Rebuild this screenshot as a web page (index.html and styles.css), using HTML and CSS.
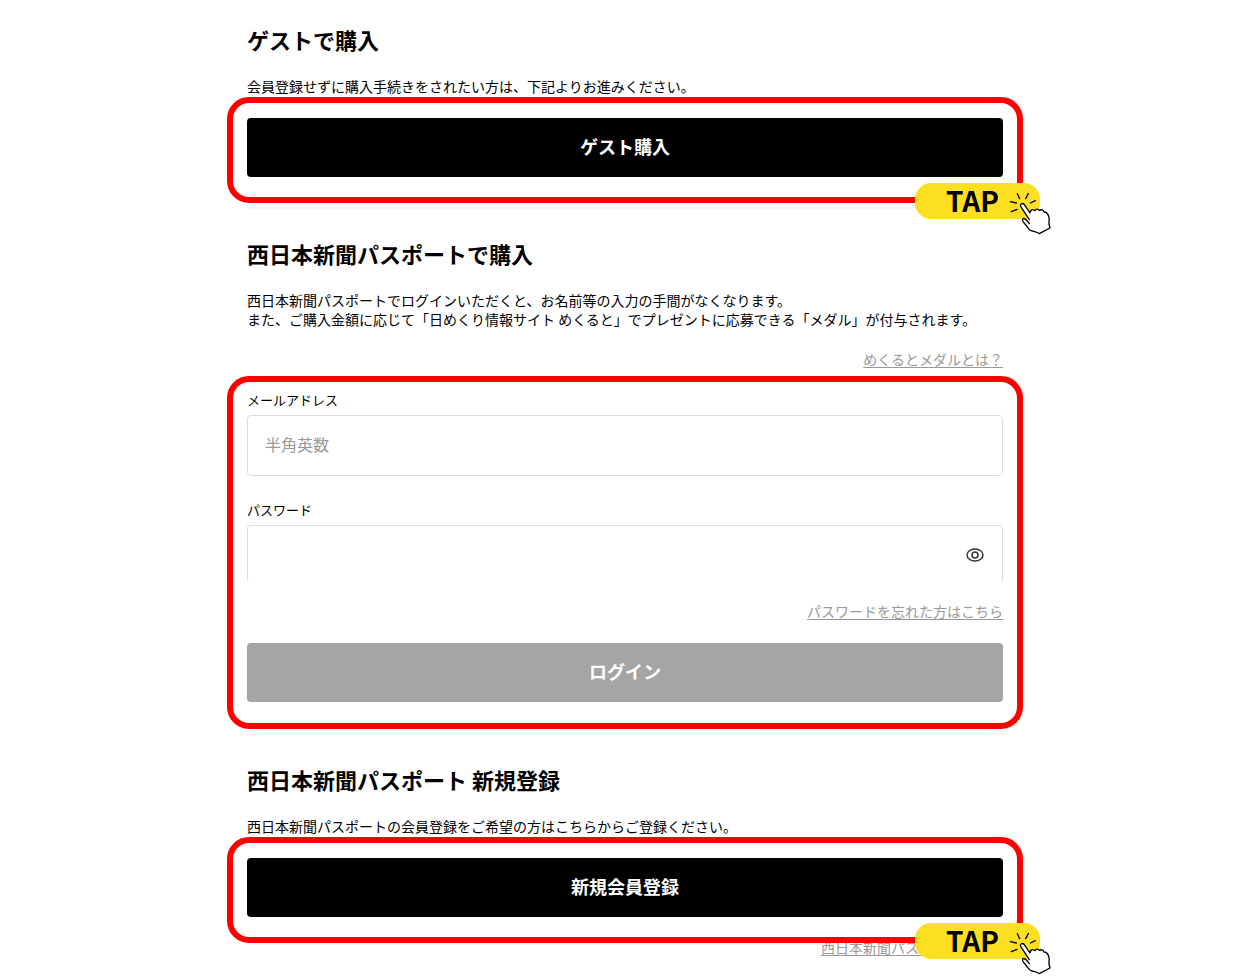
FILE: index.html
```
<!DOCTYPE html>
<html lang="ja">
  <head>
    <meta charset="UTF-8" />
    <meta name="viewport" content="width=device-width, initial-scale=1.0" />
    <title>ログイン・購入手続き</title>
    <link rel="stylesheet" href="styles.css">
  </head>
  <body>
    <!-- shared tap icon -->
    <svg class="sprite" aria-hidden="true">
      <symbol id="tap-hand" viewBox="354 90 132 138">
        <g fill="none" stroke="#000" stroke-width="4" stroke-linecap="round" stroke-linejoin="round">
          <path d="M382 101l7 15M415 101l-8 15M436 122l-15 7M361 125l18 4M364 155l17-7" />
          <path fill="#fff" d="M418 179L392 139c-3-7 6-12 11-5l17 25c1-8 6-12 11-9l4 2c3-6 10-6 13-1 6-4 12-1 14 5 8 0 13 8 15 16 2 8-1 14 0 20l3 12-32 17c-7-7-19-5-28-11-7-5-10-13-17-20-5-6-8-10-4-14 7-3 11 5 19 15" />
        </g>
      </symbol>
    </svg>

    <main class="container">
      <section class="section">
        <h2 class="section__title">ゲストで購入</h2>
        <p class="section__text">会員登録せずに購入手続きをされたい方は、下記よりお進みください。</p>
        <div class="frame">
          <button class="button" type="button">ゲスト購入</button>
          <div class="tap">
            TAP
            <svg class="tap__hand" aria-hidden="true"><use href="#tap-hand" /></svg>
          </div>
        </div>
      </section>

      <section class="section">
        <h2 class="section__title">西日本新聞パスポートで購入</h2>
        <p class="section__text">
          西日本新聞パスポートでログインいただくと、お名前等の入力の手間がなくなります。<br />
          また、ご購入金額に応じて「日めくり情報サイト めくると」でプレゼントに応募できる「メダル」が付与されます。
        </p>
        <p class="more more--medal"><a class="link" href="#">めくるとメダルとは？</a></p>
        <form class="frame frame--form">
          <label class="label" for="email">メールアドレス</label>
          <input class="input" type="email" id="email" placeholder="半角英数" />
          <label class="label label--password" for="password">パスワード</label>
          <div class="password">
            <input class="input input--password" type="password" id="password" />
            <button class="password__eye" type="button" aria-label="パスワードを表示">
              <svg viewBox="0 0 18 16" width="18" height="16" fill="none" stroke="#333" stroke-width="1.5">
                <ellipse cx="9" cy="8" rx="8" ry="6" />
                <circle cx="9" cy="8" r="3" />
              </svg>
            </button>
          </div>
          <p class="more more--forgot"><a class="link" href="#">パスワードを忘れた方はこちら</a></p>
          <button class="button button--login" type="submit" disabled>ログイン</button>
        </form>
      </section>

      <section class="section">
        <h2 class="section__title">西日本新聞パスポート 新規登録</h2>
        <p class="section__text">西日本新聞パスポートの会員登録をご希望の方はこちらからご登録ください。</p>
        <div class="frame">
          <button class="button" type="button">新規会員登録</button>
          <div class="tap">
            TAP
            <svg class="tap__hand" aria-hidden="true"><use href="#tap-hand" /></svg>
          </div>
        </div>
        <p class="more more--passport"><a class="link" href="#">西日本新聞パスポートとは？</a></p>
      </section>
    </main>
  </body>
</html>
```
FILE: styles.css
```
* {
  padding: 0;
  margin: 0;
  box-sizing: border-box;
}

body {
  background-color: #fff;
  color: #000;
  font-family: "Noto Sans CJK JP", sans-serif;
  font-size: 14px;
  line-height: 19px;
}

button,
input {
  font-family: inherit;
}

.sprite {
  display: none;
}

.container {
  width: 100%;
  max-width: 796px;
  margin: 0 auto;
  padding: 23px 20px 22px;
}

.section + .section {
  margin-top: 4px;
  padding-top: 28px;
  border-top: 2px solid #f5f5f5;
}

.section__title {
  margin-bottom: 22px;
  font-size: 22px;
  line-height: 32px;
  font-weight: bold;
}

/* red highlight around the action */
.frame {
  position: relative;
  z-index: 1;
  margin: 1px -20px 0;
  padding: 15px 14px 20px;
  border: 6px solid #f00;
  border-radius: 22px;
}

.frame--form {
  padding-top: 8px;
  padding-bottom: 21px;
}

.button {
  display: block;
  width: 100%;
  height: 59px;
  padding-bottom: 4px;
  border: none;
  border-radius: 4px;
  background-color: #000;
  color: #fff;
  font-size: 18px;
  font-weight: bold;
  cursor: pointer;
}

.button--login {
  background-color: #a5a5a5;
  cursor: default;
}

.tap {
  position: absolute;
  right: -23px;
  bottom: -22px;
  width: 125px;
  height: 36px;
  padding-left: 31px;
  border-radius: 16px;
  background-color: #fcdf20;
  font-size: 28px;
  line-height: 34px;
  font-weight: bold;
}

.tap__hand {
  position: absolute;
  top: 7px;
  right: -12px;
  width: 44px;
  height: 46px;
}

.label {
  display: block;
  margin-bottom: 6px;
  font-size: 13px;
}

.label--password {
  margin-top: 24px;
}

.input {
  display: block;
  width: 100%;
  height: 61px;
  padding: 0 17px 4px;
  border: 1px solid #ddd;
  border-radius: 4px;
  background-color: #fff;
  font-size: 16px;
}

.input::placeholder {
  color: #999;
}

.input--password {
  height: 58px;
  padding-right: 50px;
  border-bottom-color: transparent;
}

.password {
  position: relative;
}

.password__eye {
  position: absolute;
  top: 22px;
  right: 19px;
  width: 18px;
  height: 16px;
  border: none;
  background: none;
  cursor: pointer;
}

.password__eye svg {
  display: block;
}

.more {
  text-align: right;
}

.more--medal {
  margin: 21px 0 7px;
}

.more--forgot {
  margin: 19px 0 22px;
}

.more--passport {
  margin-top: -5px;
}

.link {
  color: #999;
  text-decoration: underline;
  text-underline-offset: 2px;
}
```
